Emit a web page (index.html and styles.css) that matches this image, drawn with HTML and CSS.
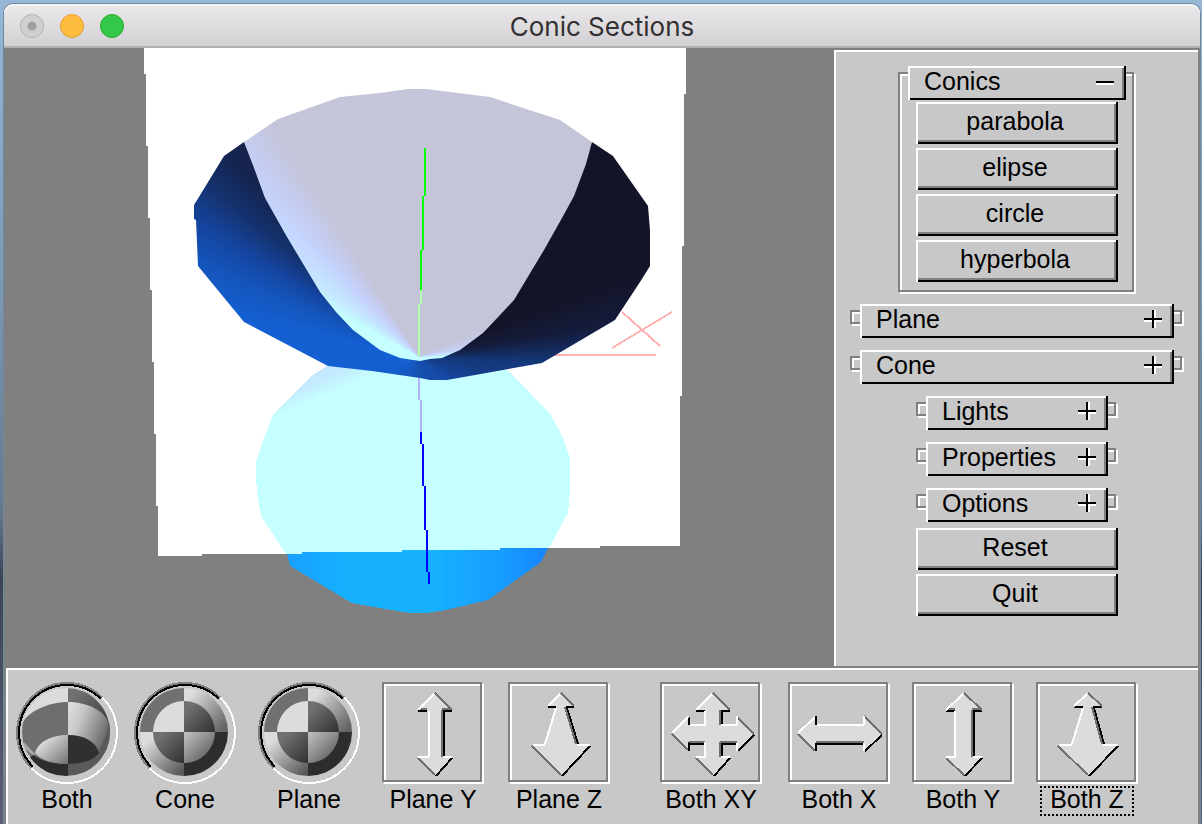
FILE: index.html
```html
<!DOCTYPE html>
<html lang="en">
<head>
<meta charset="utf-8">
<title>Conic Sections</title>
<link rel="stylesheet" href="styles.css">
</head>
<body>
<div class="window">
  <header class="titlebar">
    <div class="lights">
      <button class="light light-close" aria-label="Close"></button>
      <button class="light light-min" aria-label="Minimize"></button>
      <button class="light light-zoom" aria-label="Zoom"></button>
    </div>
    <h1 class="title">Conic Sections</h1>
  </header>

  <main class="workspace">
    <div class="viewport">
      <svg class="scene" viewBox="4 48 830 618" role="img" aria-label="Cone cut by a plane" shape-rendering="crispEdges">
        <defs>
          <linearGradient id="lower" gradientUnits="userSpaceOnUse" x1="286" y1="0" x2="549" y2="0">
            <stop offset="0" stop-color="#17a0ff"/><stop offset=".25" stop-color="#17b2ff"/>
            <stop offset=".55" stop-color="#17b2ff"/><stop offset=".8" stop-color="#179eff"/>
            <stop offset="1" stop-color="#1785ff"/>
          </linearGradient>
          <linearGradient id="tint" gradientUnits="userSpaceOnUse" x1="322" y1="366" x2="333" y2="392">
            <stop offset="0" stop-color="#c5e6ff"/><stop offset=".5" stop-color="#c5ecff"/><stop offset="1" stop-color="#c5ffff"/>
          </linearGradient>
        </defs>
        <path fill="#fff" d="M144 48H686V94H684V246H682V396H680V546H600V548H500V550H402V552H302V554H202V556H158V506H156V434H154V362H152V290H150V218H148V146H146V74H144Z"/>
        <path fill="url(#lower)" d="M286 550 290 566 352 603 374 607 410 613H427L446 610 488 600 541 562 549 546Z"/>
        <path fill="url(#tint)" d="M330 364 310 377 273 415 264 438 256 461V480L258 498 261 516 286 554H302V552H402V550H500V548H549L568 513 570 490V458L564 440 551 415 511 373 500 366Z"/>
        <path fill="none" stroke="#ffb2b2" stroke-width="2" d="M540 355H656M622 312 660 346M612 348 672 312"/>
        <foreignObject x="190" y="80" width="470" height="310"><div class="cone-inside"></div></foreignObject>
        <foreignObject x="190" y="80" width="470" height="310"><div class="cone-section"></div></foreignObject>
        <path fill="#0f0" d="M424 148h2v48h-2zM422 196h2v54h-2zM420 250h2v40h-2z"/>
        <path fill="#b2ffb2" d="M420 290h2v14h-2zM418 304h2v52h-2z"/>
        <path fill="#b2b2ff" d="M418 378h2v22h-2zM420 400h2v32h-2z"/>
        <path fill="#00f" d="M420 432h2v12h-2zM422 444h2v42h-2zM424 486h2v44h-2zM426 530h2v42h-2zM428 572h2v12h-2z"/>
      </svg>
    </div>

    <aside class="panel">
      <section class="rollout rollout-open">
        <button class="bar" aria-expanded="true">Conics
          <svg class="sign" viewBox="0 -2 20 22"><path fill="#fff" d="M0 11h18v2H0z"/><path d="M0 9h18v2H0z"/></svg>
        </button>
        <div class="choices">
          <button class="push">parabola</button>
          <button class="push">elipse</button>
          <button class="push">circle</button>
          <button class="push">hyperbola</button>
        </div>
      </section>
      <section class="rollout rollout-wide">
        <button class="bar" aria-expanded="false">Plane
          <svg class="sign" viewBox="0 -2 20 22"><path fill="#fff" d="M0 10h18v2H0zM10 0h2v18h-2z"/><path d="M0 8h18v2H0zM8 0h2v18H8z"/></svg>
        </button>
      </section>
      <section class="rollout rollout-wide">
        <button class="bar" aria-expanded="false">Cone
          <svg class="sign" viewBox="0 -2 20 22"><path fill="#fff" d="M0 10h18v2H0zM10 0h2v18h-2z"/><path d="M0 8h18v2H0zM8 0h2v18H8z"/></svg>
        </button>
      </section>
      <section class="rollout">
        <button class="bar" aria-expanded="false">Lights
          <svg class="sign" viewBox="0 -2 20 22"><path fill="#fff" d="M0 10h18v2H0zM10 0h2v18h-2z"/><path d="M0 8h18v2H0zM8 0h2v18H8z"/></svg>
        </button>
      </section>
      <section class="rollout">
        <button class="bar" aria-expanded="false">Properties
          <svg class="sign" viewBox="0 -2 20 22"><path fill="#fff" d="M0 10h18v2H0zM10 0h2v18h-2z"/><path d="M0 8h18v2H0zM8 0h2v18H8z"/></svg>
        </button>
      </section>
      <section class="rollout">
        <button class="bar" aria-expanded="false">Options
          <svg class="sign" viewBox="0 -2 20 22"><path fill="#fff" d="M0 10h18v2H0zM10 0h2v18h-2z"/><path d="M0 8h18v2H0zM8 0h2v18H8z"/></svg>
        </button>
      </section>
      <div class="actions">
        <button class="push">Reset</button>
        <button class="push">Quit</button>
      </div>
    </aside>
  </main>

  <footer class="tools">
    <button class="tool">
      <svg class="ball" viewBox="0 0 102 102">
        <defs>
          <linearGradient id="fadeR" x1="0" y1="0" x2="1" y2=".6"><stop offset="0" stop-color="#e0e0e0"/><stop offset=".3" stop-color="#c8c8c8"/><stop offset="1" stop-color="#4a4a4a"/></linearGradient>
          <linearGradient id="darkR" x1="0" y1="0" x2="1" y2="1"><stop offset=".2" stop-color="#707070"/><stop offset="1" stop-color="#303030"/></linearGradient>
          <linearGradient id="midR" x1="0" y1="0" x2="1" y2="1"><stop offset="0" stop-color="#c4c4c4"/><stop offset="1" stop-color="#4c4c4c"/></linearGradient>
          <linearGradient id="topR" gradientUnits="userSpaceOnUse" x1="52" y1="12" x2="92" y2="44"><stop offset=".1" stop-color="#dcdcdc"/><stop offset="1" stop-color="#646464"/></linearGradient>
          <linearGradient id="botL" gradientUnits="userSpaceOnUse" x1="12" y1="54" x2="46" y2="92"><stop offset=".1" stop-color="#dcdcdc"/><stop offset="1" stop-color="#585858"/></linearGradient>
          <linearGradient id="dishL" x1="0" y1="0" x2="1" y2="1"><stop offset=".2" stop-color="#e0e0e0"/><stop offset="1" stop-color="#707070"/></linearGradient>
          <clipPath id="disc"><circle cx="50" cy="50" r="44"/></clipPath>
          <g id="well" fill="none" stroke-width="2" shape-rendering="crispEdges">
            <circle cx="51" cy="51" r="50" pathLength="2" stroke-dasharray="1 1" transform="rotate(135 51 51)" stroke="#808080"/>
            <circle cx="51" cy="51" r="50" pathLength="2" stroke-dasharray="1 1" transform="rotate(-45 51 51)" stroke="#fff"/>
            <circle cx="51" cy="51" r="48" pathLength="2" stroke-dasharray="1 1" transform="rotate(135 51 51)" stroke="#000"/>
          </g>
          <g id="checker">
            <g clip-path="url(#disc)">
              <path fill="#707070" d="M0 0h50v50H0z"/>
              <path fill="url(#topR)" d="M50 0h50v50H50z"/>
              <path fill="url(#botL)" d="M0 50h50v50H0z"/>
              <path fill="#2d2d2d" d="M50 50h50v50H50z"/>
            </g>
            <path fill="#dcdcdc" d="M50 50H19A31 31 0 0 1 50 19Z"/>
            <path fill="url(#darkR)" d="M50 50V19A31 31 0 0 1 81 50Z"/>
            <path fill="url(#darkR)" d="M50 50V81A31 31 0 0 1 19 50Z"/>
            <path fill="url(#midR)" d="M50 50H81A31 31 0 0 1 50 81Z"/>
          </g>
        </defs>
        <g clip-path="url(#disc)">
          <path fill="#dcdcdc" d="M0 0h52v50H0z"/>
          <path fill="url(#darkR)" d="M52 0h50v50H52z"/>
          <path fill="#6e6e6e" d="M52 20C32 20 12 30 7 40L0 60 30 90H52Z"/>
          <path fill="url(#fadeR)" d="M52 20C70 20 88 28 92 40L98 60 72 90H52Z"/>
          <path fill="#5a5a5a" d="M93 38 98 60 80 90H52V82C66 81 80 76 83 68 88 60 92 48 93 38Z"/>
          <path fill="#a8a8a8" d="M8 60 19 72 20 76 8 66Z"/>
          <path fill="#2d2d2d" d="M18 73C26 80 40 82 52 82V96H30L12 76Z"/>
          <path fill="#5a5a5a" d="M52 82C66 82 78 78 84 70L86 84 60 98H52Z"/>
        </g>
        <path fill="url(#dishL)" d="M52 53C35 53 22 60 19 71 24 78 38 82 52 82Z"/>
        <path fill="#303030" d="M52 53C69 53 80 60 83 71 78 78 66 82 52 82Z"/>
        <use href="#well"/>
      </svg>
      <span class="label">Both</span>
    </button>
    <button class="tool">
      <svg class="ball" viewBox="0 0 102 102"><use href="#checker"/><use href="#well"/></svg>
      <span class="label">Cone</span>
    </button>
    <button class="tool">
      <svg class="ball" viewBox="0 0 102 102"><use href="#checker"/><use href="#well"/></svg>
      <span class="label">Plane</span>
    </button>
    <button class="tool">
      <svg class="tile" viewBox="0 0 100 100">
        <path class="face" d="M53 10 70 28H60V75H70L53 94 36 75H46V28H36Z"/>
        <path class="black" d="M36 29H45M62 28V75M62 29H70M70 76 54 94"/>
        <path class="gray" d="M53 11 70 28M60 28V75M60 27H68M36 76 53 93M45 27H38"/>
        <path class="white" d="M52 12 36 28M47 29V75M36 75H47M61 75H70"/>
      </svg>
      <span class="label">Plane Y</span>
    </button>
    <button class="tool">
      <svg class="tile" viewBox="0 0 100 100">
        <path class="face" d="M53 10 66 24H57L69 63H82L53 94 24 63H37L48 24H40Z"/>
        <path class="black" d="M40 25H48M58 25H66M59 26 70 62M82 64 54 94"/>
        <path class="gray" d="M53 11 66 24M57 25 68 62M24 64 53 93"/>
        <path class="white" d="M52 12 40 24M48 26 37 62M25 63H37M69 63H82"/>
      </svg>
      <span class="label">Plane Z</span>
    </button>
    <button class="tool">
      <svg class="tile" viewBox="0 0 100 100">
        <path class="face" d="M53 10 70 28H60V43H77V34L94 52 77 69V60H60V75H70L53 94 36 75H45V60H29V69L12 52 29 34V43H45V28H36Z"/>
        <path class="black" d="M36 29H45M62 28V42M60 29H70M29 35V43M30 62H45M29 60V69M62 62H77M62 60V75M94 53 78 69M70 76 54 94"/>
        <path class="gray" d="M53 11 70 28M60 28V43M77 35 94 52M29 60H45M60 60H77M60 60V75M12 52 28 68M36 76 53 93"/>
        <path class="white" d="M52 12 36 28M45 29V43M30 43H46M61 43H77M77 34V43M28 35 12 51M45 60V75M36 75H46M61 75H70M77 61V69"/>
      </svg>
      <span class="label">Both XY</span>
    </button>
    <button class="tool">
      <svg class="tile" viewBox="0 0 100 100">
        <path class="face" d="M10 52 28 34V43H76V34L94 52 76 69V60H28V69Z"/>
        <path class="black" d="M28 34V43M28 62H76M28 61V69M94 53 77 69"/>
        <path class="gray" d="M76 34 94 52M28 60H76M10 52 27 69"/>
        <path class="white" d="M27 35 10 51M29 43H76M76 34V43M76 61V69"/>
      </svg>
      <span class="label">Both X</span>
    </button>
    <button class="tool">
      <svg class="tile" viewBox="0 0 100 100">
        <path class="face" d="M52 10 70 28H60V75H70L52 94 34 75H43V28H34Z"/>
        <path class="black" d="M34 29H43M62 28V75M62 29H70M70 76 53 94"/>
        <path class="gray" d="M52 11 70 28M60 28V75M60 27H68M34 76 52 93M43 27H36"/>
        <path class="white" d="M51 12 34 28M43 29V75M34 75H44M61 75H70"/>
      </svg>
      <span class="label">Both Y</span>
    </button>
    <button class="tool">
      <svg class="tile" viewBox="0 0 100 100">
        <path class="face" d="M52 10 66 24H57L67 63H82L52 94 22 63H36L47 24H38Z"/>
        <path class="black" d="M38 25H47M57 25H66M58 26 68 62M82 64 53 94"/>
        <path class="gray" d="M52 11 66 24M56 25 66 62M22 64 52 93"/>
        <path class="white" d="M51 12 38 24M47 26 36 62M23 63H36M67 63H82"/>
      </svg>
      <span class="label label-focus">Both Z</span>
    </button>
  </footer>
</div>
</body>
</html>
```
FILE: styles.css
```css
* { box-sizing: border-box; }

body {
  margin: 0;
  min-height: 100vh;
  padding: 4px 2px 0 4px;
  background: linear-gradient(#96b8d6 0, #7b98b4 35%, #66788c 62%, #3d4554 70%, #5a5f72 100%);
  font-family: "Liberation Sans", Arial, sans-serif;
  font-size: 25px;
  color: #000;
}

button {
  margin: 0;
  padding: 0;
  border: 0;
  background: none;
  font: inherit;
  color: inherit;
}

svg { display: block; }

.window {
  display: flex;
  flex-direction: column;
  min-height: calc(100vh - 4px);
  background: #808080;
  border-radius: 9px 9px 0 0;
  box-shadow: 0 0 0 1px #6c88a3;
}

/* Title bar */
.titlebar {
  display: grid;
  grid-template-columns: 1fr auto 1fr;
  align-items: center;
  height: 44px;
  padding: 2px 16px 0;
  background: linear-gradient(#ebe9eb, #d2d0d3);
  border-bottom: 2px solid #b0aeb1;
  border-radius: 9px 9px 0 0;
  box-shadow: inset 0 2px #f6f5f6;
}

.lights { display: flex; gap: 16px; }

.light {
  width: 24px;
  height: 24px;
  border: 1px solid;
  border-radius: 50%;
}

.light-close { background: radial-gradient(circle, #a0a0a0 0 4px, #d0d0d0 5px); border-color: #b0b0b0; }
.light-min { background: #ffbd40; border-color: #df9e35; }
.light-zoom { background: #34c84a; border-color: #27ab36; }

.title {
  margin: 0;
  padding-top: 2px;
  font: 400 26px/38px Inter, Roboto, sans-serif;
  color: #323032;
}

/* Workspace */
.workspace {
  flex: 1;
  display: flex;
  padding: 0 2px 2px 0;
}

.viewport { flex: 1; min-width: 0; display: flex; }
.scene { width: 100%; }

.cone-inside,
.cone-section { width: 470px; height: 310px; }

.cone-inside {
  background: conic-gradient(at 229px 277px,
    #131427 0deg 68deg, #141b3a 80deg, #14387a 93deg, #154aa8 132deg,
    #1550b0 180deg, #145fd0 250deg, #1460d2 282deg, #1455bc 293deg,
    #1445a0 301deg, #15326f 309deg, #15244f 317deg, #15214b 324deg, #131427 335deg 360deg);
  clip-path: polygon(54px 62px, 34px 76px, 4px 125px, 4px 139px, 6px 140px, 8px 186px,
    54px 242px, 138px 286px, 182px 291px, 230px 298px, 240px 300px, 257px 300px,
    352px 283px, 425px 240px, 450px 202px, 460px 186px, 460px 150px, 458px 126px,
    423px 76px, 402px 62px);
}

.cone-section {
  background: conic-gradient(at 229px 277px,
    #c5c5da 0deg 66deg, #c5ccea 74deg, #c5d5ff 80deg, #c5ffff 90deg 298deg,
    #c5eaff 305deg, #c5d5ff 315deg, #c5ccf0 321deg, #c5c5da 328deg);
  clip-path: polygon(54px 62px, 88px 39px, 150px 17px, 190px 13px, 218px 9px, 236px 9px,
    300px 17px, 370px 40px, 402px 62px, 396px 84px, 384px 116px, 372px 138px, 354px 170px,
    336px 200px, 324px 220px, 310px 235px, 293px 253px, 270px 270px, 252px 278px, 240px 279px,
    230px 281px, 210px 278px, 190px 270px, 163px 250px, 146px 232px, 130px 212px,
    97px 157px, 75px 118px, 64px 88px);
}

/* Side panel */
.panel {
  width: 364px;
  margin-top: 2px;
  padding: 14px 0 14px;
  display: flex;
  flex-direction: column;
  align-items: center;
  gap: 12px;
  background: #c8c8c8;
  border-top: 2px solid #fff;
  border-left: 2px solid #fff;
}

.rollout {
  position: relative;
  width: 202px;
  padding: 0 10px;
}

.rollout::before {
  content: "";
  position: absolute;
  inset: 6px 2px 14px 0;
  border: 2px solid #808080;
  box-shadow: inset 2px 2px #fff, 2px 2px #fff;
}

.rollout-wide { width: 334px; }
.rollout-open { width: 238px; margin-bottom: -2px; padding-bottom: 12px; }
.rollout-open::before { bottom: 2px; }

.bar {
  position: relative;
  display: flex;
  align-items: center;
  justify-content: space-between;
  width: 100%;
  height: 34px;
  padding: 0 10px 4px 16px;
  background: #c8c8c8;
  box-shadow: inset 2px 0 #fff, inset -2px 0 #000, inset 0 -2px #000, inset 0 2px #fff, inset -4px 0 #808080;
}

.sign { width: 20px; height: 22px; }

.choices,
.actions {
  position: relative;
  display: flex;
  flex-direction: column;
  gap: 4px;
}

.choices { margin: 2px 8px 0; }
.actions { width: 202px; margin-top: -6px; }

.push {
  height: 42px;
  padding: 0 4px 4px 0;
  background: #c8c8c8;
  box-shadow: inset 2px 0 #fff, inset -2px 0 #000, inset 0 -2px #000, inset 0 2px #fff, inset -4px -4px #808080;
}

/* Bottom tools */
.tools {
  display: grid;
  grid-template-columns: 110px 118px 124px 124px 126px 152px 128px 124px 124px;
  margin: 0 2px;
  padding: 12px 0 8px;
  background: #c8c8c8;
  border-top: 2px solid #fff;
  border-left: 2px solid #fff;
}

.tool {
  display: flex;
  flex-direction: column;
  align-items: center;
  justify-self: end;
  width: 102px;
}

.ball { width: 102px; height: 102px; margin-bottom: 2px; }

.tile {
  width: 100px;
  height: 100px;
  margin: 0 2px 4px 0;
  box-shadow: inset 0 0 0 2px #808080, inset 4px 4px #fff, 2px 2px #fff;
  shape-rendering: crispEdges;
}

.face { fill: #dcdcdc; }
.white, .gray, .black { fill: none; stroke-width: 2; }
.white { stroke: #fff; }
.gray { stroke: #707070; }
.black { stroke: #000; }

.label {
  height: 30px;
  padding: 0 10px;
  line-height: 26px;
  white-space: nowrap;
}

.label-focus { outline: 2px dotted #000; outline-offset: -2px; }
```
